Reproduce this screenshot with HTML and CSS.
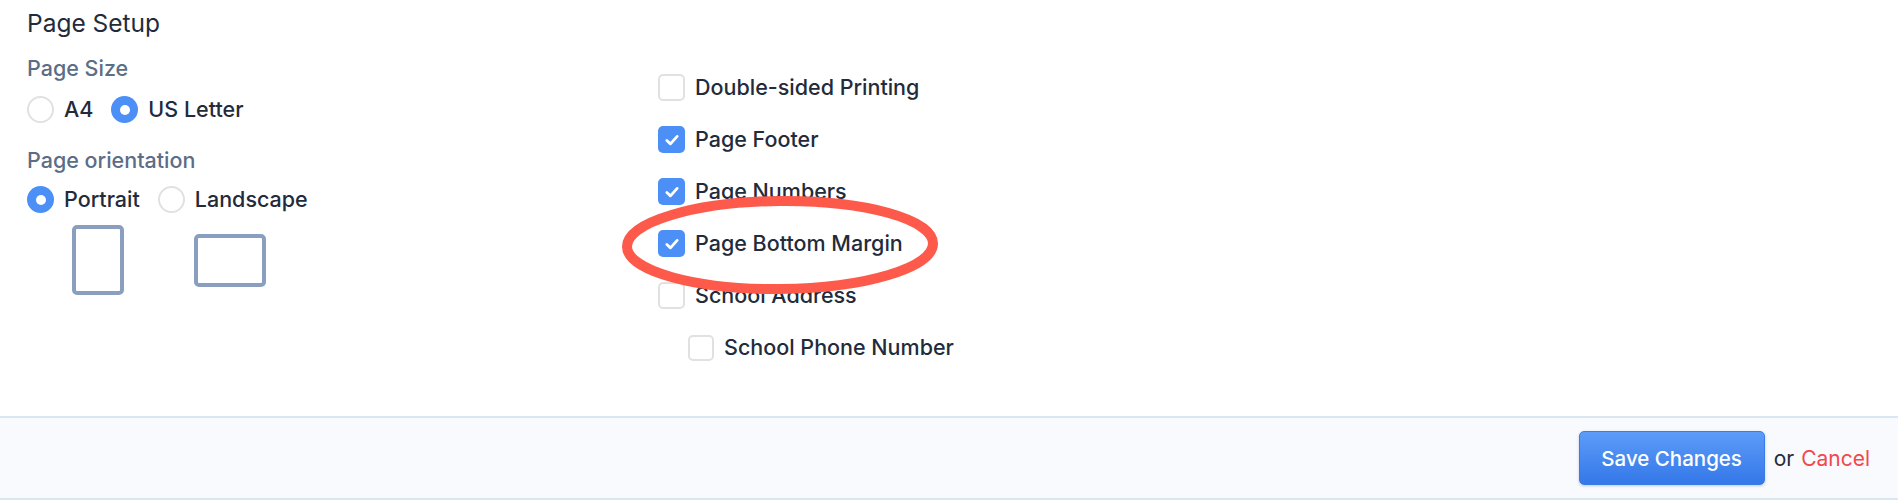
FILE: index.html
```html
<!DOCTYPE html>
<html>
<head>
<meta charset="utf-8">
<link rel="stylesheet" href="styles.css">
</head>
<body>
<div class="page">
  <main class="setup">
    <h1 class="title">Page Setup</h1>
    <div class="cols">
      <div class="col-left">
        <div class="group">
          <div class="label">Page Size</div>
          <div class="radios">
            <span class="opt"><span class="radio"></span>A4</span>
            <span class="opt"><span class="radio on"></span>US Letter</span>
          </div>
        </div>
        <div class="group group2">
          <div class="label">Page orientation</div>
          <div class="radios">
            <span class="opt"><span class="radio on"></span>Portrait</span>
            <span class="opt"><span class="radio"></span>Landscape</span>
          </div>
          <div class="shapes">
            <span class="shape portrait"></span>
            <span class="shape landscape"></span>
          </div>
        </div>
      </div>
      <div class="col-right">
        <label class="check"><span class="box"></span>Double-sided Printing</label>
        <label class="check"><span class="box on"><svg viewBox="0 0 14 14"><path d="M3 7.4 L5.8 10 L11 4.2"/></svg></span>Page Footer</label>
        <label class="check"><span class="box on"><svg viewBox="0 0 14 14"><path d="M3 7.4 L5.8 10 L11 4.2"/></svg></span>Page Numbers</label>
        <label class="check"><span class="box on"><svg viewBox="0 0 14 14"><path d="M3 7.4 L5.8 10 L11 4.2"/></svg></span>Page Bottom Margin</label>
        <label class="check"><span class="box"></span>School Address</label>
        <label class="check sub"><span class="box small"></span>School Phone Number</label>
      </div>
    </div>
    <svg class="annot" width="340" height="120" viewBox="0 0 340 120"><ellipse cx="160" cy="58" rx="153" ry="44" transform="rotate(-0.6 160 58)"/></svg>
  </main>
  <footer class="actions">
    <button class="btn">Save Changes</button>
    <span class="or">or</span>
    <a class="cancel">Cancel</a>
  </footer>
</div>
</body>
</html>
```
FILE: styles.css
```css
* { box-sizing: border-box; }
html, body { margin: 0; padding: 0; background: #fff; }
body {
  font-family: Inter, "Noto Sans", "Liberation Sans", sans-serif;
  color: #232b3b;
}
.page { width: 1898px; height: 500px; display: flex; flex-direction: column; }
.setup { position: relative; height: 416px; padding-left: 27px; }
.title {
  margin: 0;
  padding-top: 9px;
  font-size: 24.5px;
  line-height: 28px;
  font-weight: 400;
  color: #232b3b;
}
.cols { display: grid; grid-template-columns: 631px auto; }
.col-left { padding-top: 19px; }
.label {
  font-size: 21.5px;
  line-height: 24px;
  font-weight: 500;
  color: #5b6d87;
}
.radios { display: flex; align-items: center; gap: 18px; margin-top: 16px; font-size: 21.5px; font-weight: 500; }
.opt { display: flex; align-items: center; gap: 10px; line-height: 27px; }
.radio {
  width: 27px; height: 27px; border-radius: 50%;
  border: 2px solid #e1e1e1; background: #fff;
  display: inline-flex; align-items: center; justify-content: center;
}
.radio.on { border: none; background: #4b8ff7; }
.radio.on::after { content: ""; width: 10px; height: 10px; border-radius: 50%; background: #fff; }
.group2 { margin-top: 25px; }
.group2 .radios { margin-top: 14px; gap: 18px; }
.shapes { display: flex; align-items: center; margin-top: 12px; padding-left: 45px; gap: 70px; }
.shape { border: 4px solid #8a9fbf; border-radius: 5px; display: block; }
.portrait { width: 52px; height: 70px; }
.landscape { width: 72px; height: 53px; }
.col-right { padding-top: 37px; display: flex; flex-direction: column; gap: 25px; }
.check { display: flex; align-items: center; gap: 10px; font-size: 21.5px; font-weight: 500; line-height: 27px; }
.box {
  width: 27px; height: 27px; border-radius: 5px;
  border: 2px solid #e1e1e1; background: #fff;
  display: inline-flex; align-items: center; justify-content: center;
}
.box.on { border: none; background: #4b8ff7; }
.box svg { width: 18px; height: 18px; }
.box path { fill: none; stroke: #fff; stroke-width: 2.2; stroke-linecap: round; stroke-linejoin: round; }
.check.sub { padding-left: 30px; }
.box.small { width: 26px; height: 26px; }
.annot { position: absolute; left: 620px; top: 187px; }
.annot ellipse { fill: none; stroke: #fd5a4b; stroke-width: 10; }
.actions {
  flex: 1;
  display: flex; align-items: center; justify-content: flex-end;
  padding-right: 28px;
  background: #f8fafd;
  border-top: 2px solid #dbe6f3;
  border-bottom: 2px solid #dbe6f3;
  font-size: 21px;
}
.btn {
  width: 186px; height: 54px;
  font-family: inherit; font-size: 20.5px; font-weight: 500; color: #fff;
  background: linear-gradient(#5d9cf9, #3477e8);
  border: 1px solid #3a7ce6; border-radius: 5px;
  box-shadow: 0 1px 3px rgba(30, 60, 120, 0.25);
  padding: 0;
}
.or { margin-left: 9px; color: #232b3b; }
.cancel { margin-left: 7px; color: #f2474b; }
```
